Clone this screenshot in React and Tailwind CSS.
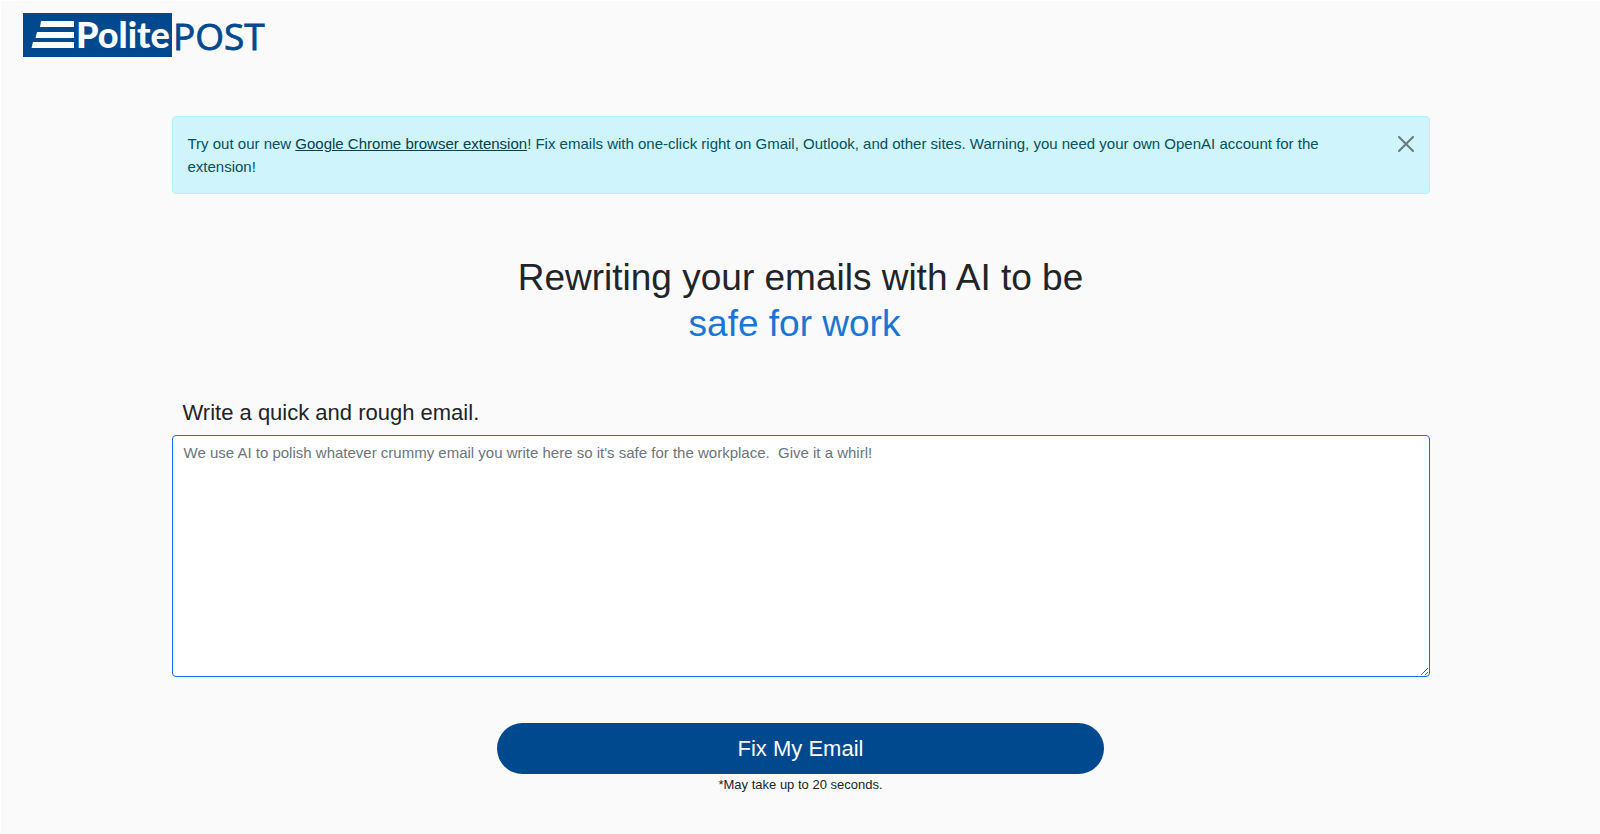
import { useState } from "react";

function Logo() {
  return (
    <svg className="block h-11 w-[242px] overflow-visible" viewBox="0 0 242 44" role="img" aria-label="PolitePOST">
      <rect width="149" height="44" fill="#00498f" />
      <path d="M18 8h33v6H17zM14 19h37v6H12.500zM10 29h41v6H8.500z" fill="#fff" />
      <text x="53" y="35" fill="#fff" fontFamily="Lato, sans-serif" fontSize="36" fontWeight="900">Polite</text>
      <text x="150" y="37" fill="#00498f" stroke="#00498f" strokeWidth="0.8" fontFamily="'Open Sans', sans-serif" fontSize="37">POST</text>
    </svg>
  );
}

function Notice({ onClose }) {
  return (
    <div role="alert" className="flex items-start justify-between rounded border border-[#b6effb] bg-[#cff4fc] py-[15px] pl-[15px] pr-[11px] text-[15px] leading-[23px] text-[#055160]">
      <p className="max-w-[1150px]">
        Try out our new{" "}
        <a href="#extension" className="text-[#04414d] underline">Google Chrome browser extension</a>! Fix emails with one-click right on Gmail, Outlook, and other sites. Warning, you need your own OpenAI account for the extension!
      </p>
      <button type="button" aria-label="Close" onClick={onClose} className="p-1">
        <svg className="h-4 w-4" viewBox="0 0 16 16" stroke="#687a7e" strokeWidth="2" strokeLinecap="round">
          <path d="M1 1l14 14M15 1L1 15" />
        </svg>
      </button>
    </div>
  );
}

export default function App() {
  const [open, setOpen] = useState(true);
  return (
    <div className="min-h-screen border-l border-t border-white bg-[#fafafa] font-['Liberation_Sans',sans-serif] text-[#212529]">
      <header className="px-[22px] pt-3">
        <a href="#home" className="inline-block align-top"><Logo /></a>
      </header>
      <main className="mx-auto w-[calc(100%-341px)] pt-[59px]">
        {open && <Notice onClose={() => setOpen(false)} />}
        <h1 className="mt-[61px] text-center text-[37px] leading-[46px]">
          Rewriting your emails with AI to be
          <span className="block pr-3 text-[#1976d2]">safe for work</span>
        </h1>
        <form onSubmit={(e) => e.preventDefault()}>
          <label htmlFor="email" className="mt-[51px] block px-[11px] text-[22px] leading-[30px]">
            Write a quick and rough email.
          </label>
          <textarea
            id="email"
            placeholder="We use AI to polish whatever crummy email you write here so it's safe for the workplace.  Give it a whirl!"
            className="mt-[7px] block h-[242px] w-full rounded border border-[#1a6cf0] bg-white px-[11px] py-[5px] text-[15px] leading-[23px] placeholder:text-[#6c757d]"
          />
          <div className="mx-auto mt-[46px] w-[48.200%] text-center">
            <button type="submit" className="block h-[51px] w-full rounded-full bg-[#00498f] text-[22px] text-white">Fix My Email</button>
            <p className="text-[13px] leading-[22px]">*May take up to 20 seconds.</p>
          </div>
        </form>
      </main>
    </div>
  );
}
